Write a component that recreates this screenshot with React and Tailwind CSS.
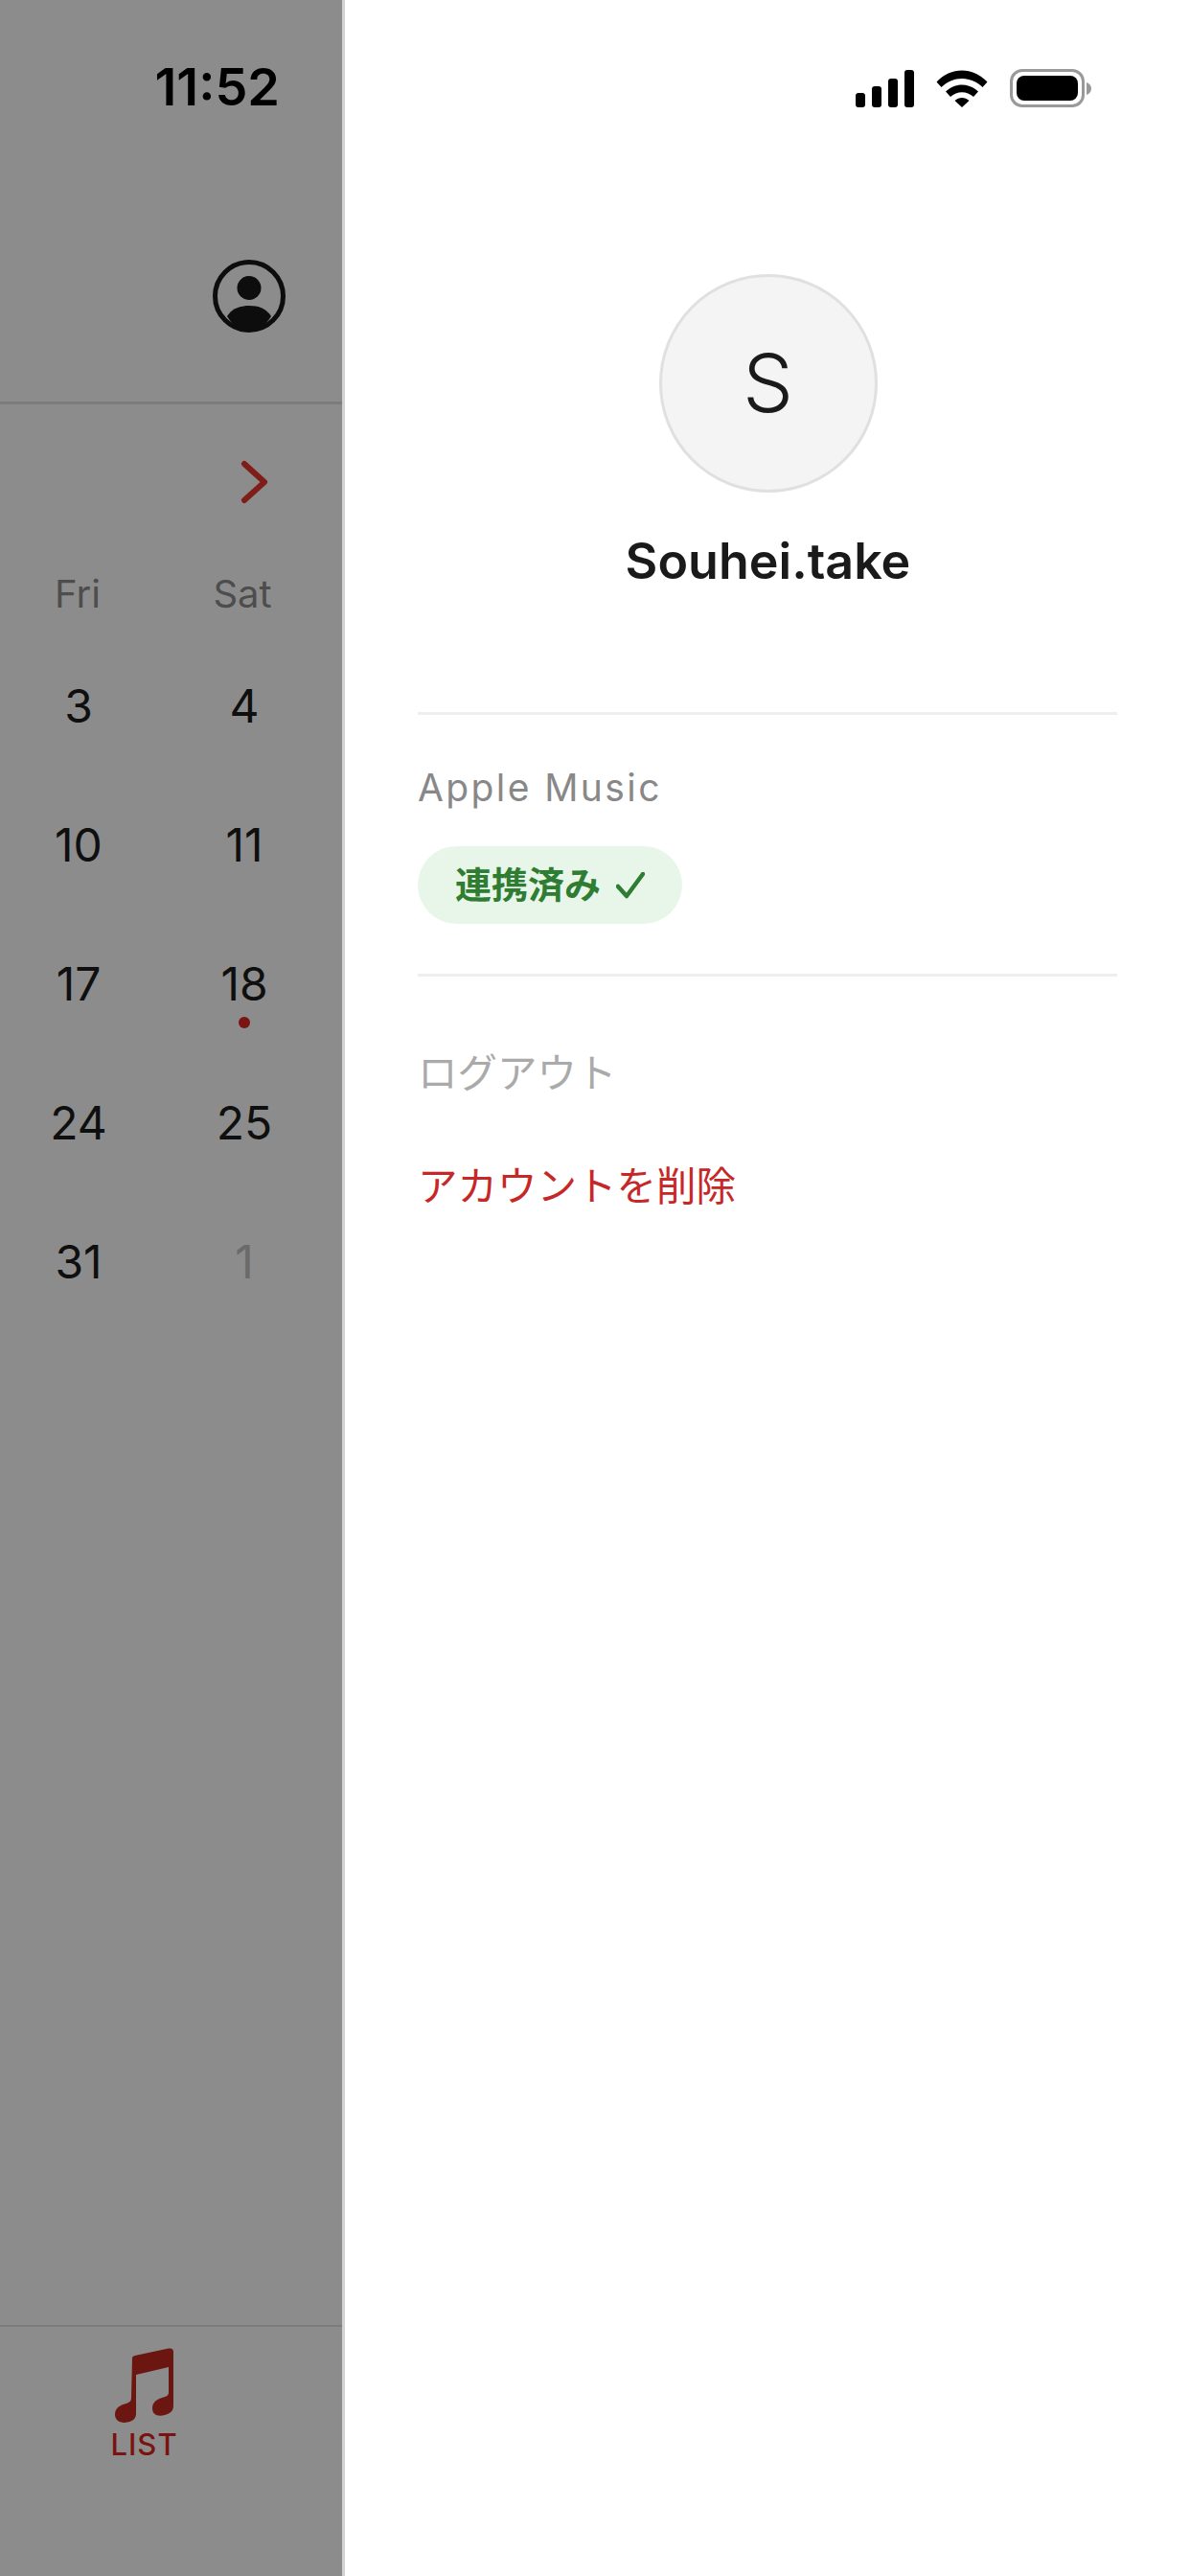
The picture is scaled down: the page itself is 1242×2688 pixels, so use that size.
const latin = "font-['Inter','Noto_Sans_CJK_JP',sans-serif]"

const weeks = [
  ['3', '4'],
  ['10', '11'],
  ['17', '18'],
  ['24', '25'],
  ['31', '1'],
]

function SignalIcon() {
  return (
    <div className="flex items-end gap-[7px] h-[39px]">
      <span className="w-[10px] h-[15px] rounded-[3px] bg-black" />
      <span className="w-[10px] h-[22px] rounded-[3px] bg-black" />
      <span className="w-[10px] h-[30px] rounded-[3px] bg-black" />
      <span className="w-[10px] h-[39px] rounded-[3px] bg-black" />
    </div>
  )
}

function WifiIcon() {
  return (
    <svg width="54" height="39" viewBox="0 0 54 39" className="block">
      <path d="M0.5 12.5 C15 -3.5 39 -3.5 53.5 12.5 L48.5 18 C36 6 18 6 5.5 18 Z" fill="#000" />
      <path d="M10 22.5 C20 13 34 13 44 22.5 L39 28 C32 21.5 22 21.5 15 28 Z" fill="#000" />
      <path d="M19.5 32 C24 28 30 28 34.5 32 L27 39 Z" fill="#000" />
    </svg>
  )
}

function BatteryIcon() {
  return (
    <div className="flex items-center gap-[2px]">
      <div className="w-[78px] h-[40px] rounded-[13px] border-[3px] border-[#999999] p-[4px]">
        <div className="w-full h-full rounded-[8px] bg-black" />
      </div>
      <svg width="5" height="13" viewBox="0 0 5 13" className="block">
        <path d="M0 0 C3 1 5 3.5 5 6.5 C5 9.5 3 12 0 13 Z" fill="#999999" />
      </svg>
    </div>
  )
}

function ProfileIcon() {
  return (
    <svg width="76" height="76" viewBox="0 0 76 76" className="block">
      <circle cx="38" cy="38" r="35.5" fill="none" stroke="#0d0d0d" strokeWidth="5" />
      <circle cx="38" cy="29.5" r="12.5" fill="#0d0d0d" />
      <path d="M15 59 C20 51 28 48 38 48 C48 48 56 51 61 59 C55 69 47 74 38 74 C29 74 21 69 15 59 Z" fill="#0d0d0d" />
    </svg>
  )
}

function MusicNote() {
  return (
    <svg width="62" height="78" viewBox="0 0 62 78" className="block">
      <path
        d="M18 11 C18 9 19 8.5 21 8 L56 0.5 C59.5 0 61 1.5 61 4 L61 60 C61 66 58 68 52 70 C45 72 39 70 39 63 C39 57 43 54 49 52 C54 50.5 56 50 56 46 L56 20 L22 28 L22 68 C22 74 19 76 13 77.5 C6 79 0 76 0 69.5 C0 63.5 4 60.5 10 58.5 C15 57 17 56 17 52 Z"
        fill="#6b1610"
      />
    </svg>
  )
}

export default function App() {
  return (
    <div className={`flex w-[1242px] h-[2688px] overflow-hidden bg-white ${latin}`}>

      {/* Dimmed calendar behind the drawer */}
      <aside className="flex flex-col w-[360px] shrink-0 bg-[#8c8c8c] border-r-[3px] border-[#d2d2d2]">
        <div className="h-[422px] shrink-0 border-b-[3px] border-[#7c7c7c] pr-[64px] flex flex-col items-end">
          <p className="mt-[61px] mr-[1px] text-[54px] leading-[60px] font-semibold text-black">11:52</p>
          <div className="mt-[150px] mr-[-5px]">
            <ProfileIcon />
          </div>
        </div>

        <div className="flex justify-end pr-[76px] pt-[58px] h-[173px] shrink-0">
          <svg width="30" height="46" viewBox="0 0 30 46" className="block">
            <path d="M4 4 L25 23 L4 42" fill="none" stroke="#7f1d18" strokeWidth="6" strokeLinecap="round" strokeLinejoin="round" />
          </svg>
        </div>

        <div className="grid grid-cols-[162px_174px] gap-x-1 h-[69px] shrink-0 text-[40px] leading-[50px] text-[#4d4d4d] text-center">
          <span>Fri</span>
          <span>Sat</span>
        </div>

        <div className="grid grid-cols-[164px_174px] gap-x-1 auto-rows-[145px] text-[48px] text-center text-[#0f0f0f]">
          {weeks.map(([fri, sat]) => (
            <div key={fri} className="contents">
              <div className="flex items-center justify-center">{fri}</div>
              <div className={`relative flex items-center justify-center ${sat === '1' ? 'text-[#6a6a6a]' : ''}`}>
                {sat}
                {sat === '18' && (
                  <span className="absolute left-1/2 top-[107px] -ml-[6px] w-[12px] h-[12px] rounded-full bg-[#7a1410]" />
                )}
              </div>
            </div>
          ))}
        </div>

        <nav className="mt-auto h-[262px] shrink-0 border-t-[2px] border-[#7c7c7c] flex flex-col items-center pr-[56px] pt-[22px]">
          <MusicNote />
          <span className="mt-[4px] text-[31px] leading-[38px] tracking-[1px] font-medium text-[#7a1410]">LIST</span>
        </nav>
      </aside>

      {/* Account drawer */}
      <main className="flex-1 flex flex-col">
        <div className="flex justify-end items-center gap-[23px] h-[40px] mt-[72px] pr-[103px]">
          <SignalIcon />
          <WifiIcon />
          <BatteryIcon />
        </div>

        <div className="flex flex-col items-center mt-[174px] px-[77px] pl-[78px]">
          <div className="w-[228px] h-[228px] rounded-full bg-[#f4f4f4] border-[3px] border-[#e0e0e0] flex items-center justify-center text-[84px] font-light text-[#1a1a1a]">
            S
          </div>
          <p className="mt-[39px] text-[52px] leading-[66px] font-semibold text-[#1a1a1a]">Souhei.take</p>
        </div>

        <div className="mx-[76px] mt-[124px] border-t-[3px] border-[#eeeeee] pt-[51px]">
          <p className="text-[39px] leading-[50px] tracking-[2.4px] text-[#888888]">Apple Music</p>
          <span className="mt-[36px] inline-flex items-center gap-[16px] h-[81px] px-[39px] rounded-full bg-[#e8f5e9] text-[38px] font-semibold text-[#2e7d32]">
            連携済み
            <svg width="30" height="28" viewBox="0 0 30 28" className="block">
              <path d="M2 15 L11 25 L28 2" fill="none" stroke="#2e7d32" strokeWidth="4.5" strokeLinecap="round" strokeLinejoin="round" />
            </svg>
          </span>
        </div>

        <div className="mx-[76px] mt-[52px] border-t-[3px] border-[#eeeeee] pt-[75px] flex flex-col gap-[66px]">
          <p className="text-[41.5px] leading-[52px] text-[#aaaaaa]">ログアウト</p>
          <p className="text-[41.5px] leading-[52px] text-[#c62828]">アカウントを削除</p>
        </div>
      </main>
    </div>
  )
}
